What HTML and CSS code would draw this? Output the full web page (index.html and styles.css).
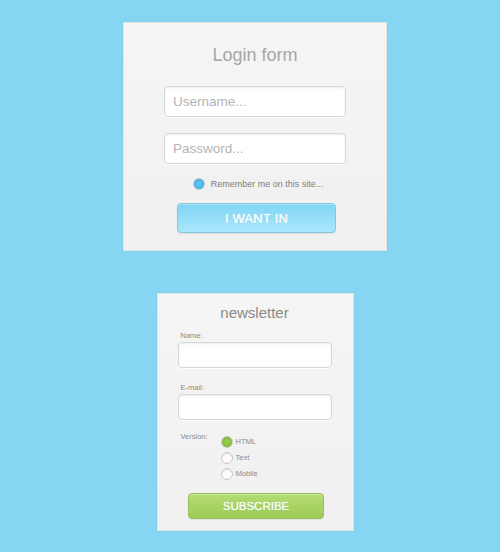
FILE: index.html
```html
<!DOCTYPE html>
<html lang="en">
<head>
<meta charset="utf-8">
<title>Forms</title>
<link rel="stylesheet" href="styles.css">
</head>
<body>
<main class="stage">
  <form class="card login">
    <h1 class="login-title">Login form</h1>
    <div class="field-box login-field"><span class="placeholder">Username...</span></div>
    <div class="field-box login-field second"><span class="placeholder">Password...</span></div>
    <label class="remember"><span class="dot dot-blue"></span>Remember me on this site...</label>
    <button type="button" class="btn btn-blue">I WANT IN</button>
  </form>

  <form class="card news">
    <h2 class="news-title">newsletter</h2>
    <div class="news-label">Name:</div>
    <div class="field-box news-field"></div>
    <div class="news-label gap">E-mail:</div>
    <div class="field-box news-field"></div>
    <div class="version">
      <div class="version-label">Version:</div>
      <ul class="options">
        <li><span class="dot dot-green"></span>HTML</li>
        <li><span class="dot"></span>Text</li>
        <li><span class="dot"></span>Mobile</li>
      </ul>
    </div>
    <button type="button" class="btn btn-green">SUBSCRIBE</button>
  </form>
</main>
</body>
</html>
```

FILE: styles.css
```css
html, body {
  margin: 0;
  padding: 0;
}

body {
  background: #85d5f3;
  font-family: "Liberation Sans", Arial, sans-serif;
  width: 500px;
  height: 552px;
  overflow: hidden;
}

.stage {
  display: flex;
  flex-direction: column;
  align-items: center;
  padding: 22px 0 0 10px;
  gap: 42px;
}

.card {
  box-sizing: border-box;
  background: linear-gradient(#f5f5f5, #f0f0f0);
  border: 1px solid #e2e6e8;
  box-shadow: 0 0 2px rgba(0, 0, 0, 0.06);
  display: flex;
  flex-direction: column;
  align-items: center;
  margin: 0;
}

/* ---- login card ---- */
.login {
  width: 264px;
  height: 229px;
  padding-top: 21px;
}

.login-title {
  margin: 0;
  font-size: 18px;
  line-height: 22px;
  font-weight: normal;
  color: #a6a6a6;
}

.field-box {
  box-sizing: border-box;
  background: #ffffff;
  border: 1px solid #d6d6d6;
  border-radius: 4px;
  box-shadow: inset 0 1px 2px rgba(0, 0, 0, 0.08), 0 1px 0 rgba(255, 255, 255, 0.9);
  display: flex;
  align-items: center;
}

.login-field {
  width: 182px;
  height: 31px;
  margin-top: 20px;
  padding-left: 8px;
}

.login-field.second {
  margin-top: 16px;
}

.placeholder {
  font-size: 13.5px;
  color: #b4b4b4;
}

.remember {
  display: flex;
  align-items: center;
  gap: 6px;
  margin-top: 14px;
  margin-left: 6px;
  height: 12px;
  font-size: 9px;
  color: #808080;
}

.dot {
  box-sizing: border-box;
  width: 12px;
  height: 12px;
  border-radius: 50%;
  background: #fafafa;
  border: 1px solid #c8c8c8;
  box-shadow: inset 0 1px 1px rgba(0, 0, 0, 0.08);
  flex: none;
}

.dot-blue {
  background: radial-gradient(circle at 50% 45%, #62c8f2 0, #3fb6ea 70%);
  border-color: #c4c8ca;
}

.dot-green {
  background: radial-gradient(circle at 50% 45%, #9ccc55 0, #85bd3c 70%);
  border-color: #c6cbc2;
}

.btn {
  box-sizing: border-box;
  border-radius: 4px;
  font-family: inherit;
  color: #ffffff;
  padding: 0;
  cursor: pointer;
}

.btn-blue {
  width: 159px;
  height: 30px;
  margin-top: 13px;
  margin-left: 3px;
  background: linear-gradient(#7fd5f6, #ace7fb);
  border: 1px solid #86c6de;
  box-shadow: inset 0 1px 0 rgba(255, 255, 255, 0.35), 0 1px 1px rgba(0, 0, 0, 0.08);
  font-size: 13px;
  letter-spacing: 0.2px;
  text-shadow: 0 0 1px rgba(255, 255, 255, 0.9), 0 0 1px rgba(60, 150, 190, 0.5);
}

/* ---- newsletter card ---- */
.news {
  width: 197px;
  height: 238px;
  padding-top: 9px;
  align-items: stretch;
  padding-left: 20px;
  padding-right: 21px;
}

.news-title {
  margin: 0;
  text-align: center;
  font-size: 15px;
  line-height: 20px;
  font-weight: normal;
  color: #8a8a8a;
}

.news-label {
  font-size: 7.5px;
  line-height: 9px;
  color: #8a8a8a;
  margin: 8px 0 2px 3px;
}

.news-label.gap {
  margin-top: 15px;
}

.news-field {
  width: 154px;
  height: 26px;
}

.version {
  display: flex;
  margin-top: 12px;
  padding-left: 3px;
}

.version-label {
  width: 40px;
  font-size: 7.5px;
  line-height: 9px;
  color: #8a8a8a;
}

.options {
  list-style: none;
  margin: 4px 0 0;
  padding: 0;
  display: flex;
  flex-direction: column;
  gap: 4px;
}

.options li {
  display: flex;
  align-items: center;
  gap: 3px;
  height: 12px;
  line-height: 12px;
  font-size: 7.5px;
  color: #8a8a8a;
}

.btn-green {
  align-self: center;
  width: 136px;
  height: 26px;
  margin-top: 13px;
  margin-left: 3px;
  background: linear-gradient(#b4dc75, #9ccb54);
  border: 1px solid #97c25a;
  box-shadow: inset 0 1px 0 rgba(255, 255, 255, 0.3), 0 1px 1px rgba(0, 0, 0, 0.08);
  font-size: 11.5px;
  text-shadow: 0 0 1px rgba(255, 255, 255, 0.9), 0 0 1px rgba(90, 140, 30, 0.5);
}
```
